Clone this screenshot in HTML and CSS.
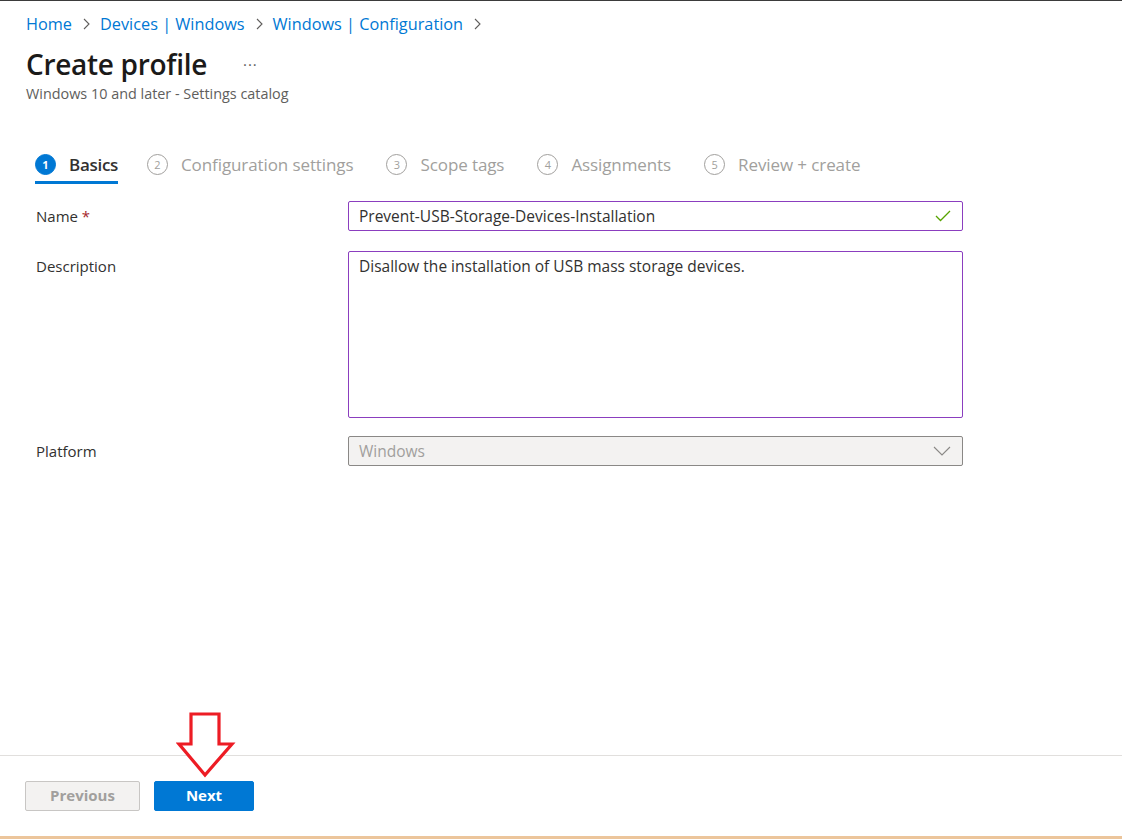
FILE: index.html
```html
<!DOCTYPE html>
<html lang="en">
<head>
<meta charset="utf-8">
<title>Create profile</title>
<link rel="stylesheet" href="styles.css">
</head>
<body>
<div class="page">
  <div class="main">
    <nav class="crumbs">
      <a class="crumb">Home</a>
      <svg class="sep" width="8" height="12" viewBox="0 0 8 12"><polyline points="2,1 7,6 2,11" fill="none" stroke="#605e5c" stroke-width="1.1"/></svg>
      <a class="crumb">Devices | Windows</a>
      <svg class="sep" width="8" height="12" viewBox="0 0 8 12"><polyline points="2,1 7,6 2,11" fill="none" stroke="#605e5c" stroke-width="1.1"/></svg>
      <a class="crumb">Windows | Configuration</a>
      <svg class="sep" width="8" height="12" viewBox="0 0 8 12"><polyline points="2,1 7,6 2,11" fill="none" stroke="#605e5c" stroke-width="1.1"/></svg>
    </nav>
    <div class="title-row">
      <h1 class="title">Create profile</h1>
      <span class="more">&middot;&middot;&middot;</span>
    </div>
    <div class="subtitle">Windows 10 and later - Settings catalog</div>

    <div class="tabs">
      <div class="tab active"><span class="num">1</span><span class="tab-label">Basics</span></div>
      <div class="tab"><span class="num">2</span><span class="tab-label">Configuration settings</span></div>
      <div class="tab"><span class="num">3</span><span class="tab-label">Scope tags</span></div>
      <div class="tab"><span class="num">4</span><span class="tab-label">Assignments</span></div>
      <div class="tab"><span class="num">5</span><span class="tab-label">Review + create</span></div>
    </div>

    <div class="form">
      <div class="row">
        <label class="label">Name <span class="req">*</span></label>
        <div class="field input">
          <span class="value">Prevent-USB-Storage-Devices-Installation</span>
          <svg class="check" width="16" height="12" viewBox="0 0 16 12"><polyline points="1,6 5.5,10.5 15,1" fill="none" stroke="#57a300" stroke-width="1.3"/></svg>
        </div>
      </div>
      <div class="row">
        <label class="label">Description</label>
        <div class="field textarea"><span class="value">Disallow the installation of USB mass storage devices.</span></div>
      </div>
      <div class="row platform">
        <label class="label">Platform</label>
        <div class="field select">
          <span class="value">Windows</span>
          <svg class="chev" width="18" height="10" viewBox="0 0 18 10"><polyline points="1,1 9,9 17,1" fill="none" stroke="#8a8886" stroke-width="1.1"/></svg>
        </div>
      </div>
    </div>
  </div>

  <footer class="footer">
    <button class="btn prev">Previous</button>
    <button class="btn next">Next</button>
    <svg class="arrow" width="60" height="66" viewBox="0 0 60 66"><polygon points="15,2 43,2 43,32 56,32 29,63 3,32 15,32" fill="#fff" stroke="#ed1c24" stroke-width="3.2" stroke-linejoin="miter"/></svg>
  </footer>
</div>
</body>
</html>
```

FILE: styles.css
```css
* { box-sizing: border-box; }
html, body { margin: 0; padding: 0; }
body {
  font-family: "Open Sans", "Noto Sans", sans-serif;
  color: #323130;
  background: #fff;
}
.page {
  height: 839px;
  display: flex;
  flex-direction: column;
  border-top: 1px solid #3b3b3b;
  border-bottom: 3px solid #ecc59b;
}
.main {
  flex: 1;
  padding: 12px 0 0 26px;
}
.crumbs {
  display: flex;
  align-items: center;
  height: 22px;
}
.crumb {
  color: #0078d4;
  font-size: 16.3px;
}
.sep { margin: 0 10px 0 10px; }
.title-row {
  display: flex;
  align-items: center;
  margin-top: 11px;
  height: 36px;
}
.title {
  margin: 0;
  font-size: 28px;
  font-weight: 600;
  letter-spacing: -0.3px;
  color: #1b1a19;
}
.more {
  margin-left: 36px;
  font-size: 15px;
  color: #605e5c;
  letter-spacing: 1px;
}
.subtitle {
  font-size: 14.4px;
  color: #605e5c;
  margin-top: 2px;
}
.tabs {
  display: flex;
  margin: 42px 0 0 9px;
  height: 41px;
}
.tab {
  display: flex;
  align-items: center;
  height: 39px;
  margin-right: 33px;
  color: #a19f9d;
  font-size: 17px;
  letter-spacing: -0.1px;
}
.tab.active {
  border-bottom: 3px solid #0078d4;
  color: #323130;
  font-weight: 600;
  margin-right: 29px;
  letter-spacing: -0.3px;
}
.num {
  width: 21px;
  height: 21px;
  border-radius: 50%;
  border: 1px solid #a19f9d;
  display: inline-flex;
  align-items: center;
  justify-content: center;
  font-size: 11px;
  margin-right: 13px;
  letter-spacing: 0;
}
.tab.active .num {
  background: #0078d4;
  border-color: #0078d4;
  color: #fff;
  font-weight: 700;
  margin-top: 3px;
}
.tab.active .tab-label { margin-top: 3px; }
.form {
  margin: 15px 0 0 10px;
  display: flex;
  flex-direction: column;
  gap: 20px;
}
.row {
  display: flex;
  align-items: flex-start;
}
.row.platform { margin-top: -2px; }
.label {
  width: 312px;
  font-size: 15px;
  line-height: 30px;
}
.req { color: #a4262c; }
.field {
  width: 615px;
  border: 1px solid #8b3ebf;
  border-radius: 2px;
  display: flex;
  align-items: center;
  padding: 0 10px;
  font-size: 15.5px;
}
.input { height: 30px; justify-content: space-between; }
.check { margin-right: 1px; }
.textarea {
  height: 167px;
  align-items: flex-start;
  padding-top: 3px;
}
.select {
  height: 30px;
  background: #f3f2f1;
  border-color: #8a8886;
  color: #a19f9d;
  justify-content: space-between;
}
.chev { margin-right: 1px; }
.footer {
  position: relative;
  height: 81px;
  border-top: 1px solid #e1dfdd;
  display: flex;
  align-items: flex-start;
  gap: 14px;
  padding: 25px 0 0 25px;
}
.btn {
  height: 30px;
  border-radius: 2px;
  font-family: "Open Sans", "Noto Sans", sans-serif;
  font-size: 15px;
  font-weight: 700;
  line-height: 26px;
  padding: 0 0 2px;
}
.prev {
  width: 115px;
  background: #f3f2f1;
  border: 1px solid #c8c6c4;
  color: #a19f9d;
}
.next {
  width: 100px;
  background: #0078d4;
  border: 1px solid #0078d4;
  color: #fff;
}
.arrow {
  position: absolute;
  left: 176px;
  top: -44px;
}
```
